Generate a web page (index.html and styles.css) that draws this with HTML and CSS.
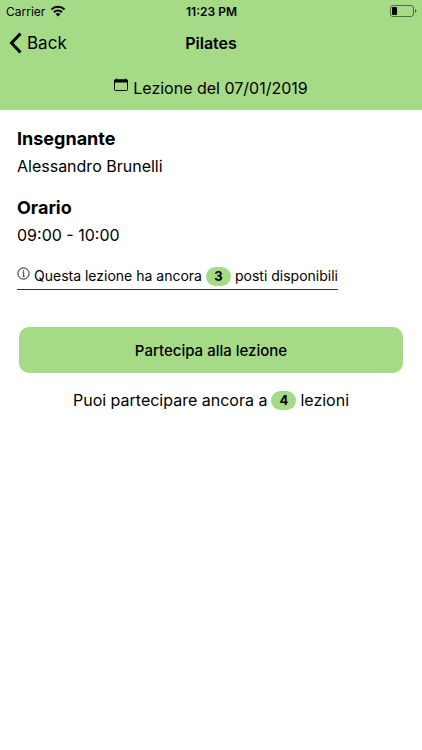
FILE: index.html
```html
<!DOCTYPE html>
<html lang="it">
<head>
    <meta charset="UTF-8">
    <meta name="viewport" content="width=device-width, initial-scale=1.0">
    <title>Pilates</title>
    <link rel="stylesheet" href="styles.css">
</head>
<body>
    <header class="header">
        <div class="status-bar">
            <div class="carrier">
                <span>Carrier</span>
                <svg width="16" height="12" viewBox="0 0 16 12" fill="none" stroke="#000" stroke-width="2">
                    <path d="M1.500 4.500C5 .9 11 .9 14.500 4.500"/>
                    <path d="M4 7.200C6.200 5 9.800 5 12 7.200"/>
                    <path d="M8 11.500L5.600 9C7 7.800 9 7.800 10.400 9Z" fill="#000" stroke="none"/>
                </svg>
            </div>
            <span class="time">11:23 PM</span>
            <svg class="battery" width="27" height="12" viewBox="0 0 27 12">
                <rect x=".5" y=".5" width="23" height="11" rx="2.500" fill="none" stroke="#000" stroke-opacity=".5"/>
                <rect x="2" y="2" width="5" height="8" rx="1"/>
                <path d="M25 4v4c2-.8 2-3.200 0-4z" fill-opacity=".5"/>
            </svg>
        </div>
        <nav class="nav-bar">
            <a class="back" href="#">
                <svg width="13" height="22" viewBox="0 0 13 22" fill="none" stroke="#000" stroke-width="3">
                    <path d="M11.500 1.500L2.500 11L11.500 20.500"/>
                </svg>
                <span>Back</span>
            </a>
            <h1>Pilates</h1>
        </nav>
        <div class="date">
            <svg width="14" height="14" viewBox="0 0 14 14">
                <rect x=".5" y="2" width="13" height="10.500" rx="1" fill="none" stroke="#000"/>
                <path d="M0 2.500a1 1 0 0 1 1-1h1V.5h1v1h8v-1h1v1h1a1 1 0 0 1 1 1V4.500H0z"/>
            </svg>
            <span>Lezione del 07/01/2019</span>
        </div>
    </header>
    <main class="content">
        <section class="detail">
            <h2>Insegnante</h2>
            <p>Alessandro Brunelli</p>
        </section>
        <section class="detail">
            <h2>Orario</h2>
            <p>09:00 - 10:00</p>
        </section>
        <p class="places">
            <svg class="info" width="13" height="13" viewBox="0 0 13 13" fill="none" stroke="#000">
                <circle cx="6.500" cy="6.500" r="5.600" stroke-width=".9"/>
                <path d="M5.600 5.700h1.100v3.500M5.600 9.300h2.100" stroke-width=".8"/>
                <circle cx="6.500" cy="3.900" r=".7" fill="#000" stroke="none"/>
            </svg>
            <span>Questa lezione ha ancora</span>
            <span class="badge">3</span>
            <span>posti disponibili</span>
        </p>
        <button class="join" type="button">Partecipa alla lezione</button>
        <p class="remaining">
            <span>Puoi partecipare ancora a</span>
            <span class="badge">4</span>
            <span>lezioni</span>
        </p>
    </main>
</body>
</html>
```

FILE: styles.css
```css
body {
    margin: 0;
    background: white;
    color: black;
    font-family: Inter, "Liberation Sans", sans-serif;
    font-size: 16px;
}
h1, h2, p {
    margin: 0;
}
.header {
    padding-bottom: 12px;
    background: #a5da86;
}
.status-bar {
    display: grid;
    grid-template-columns: 1fr auto 1fr;
    align-items: center;
    height: 22px;
    padding: 0 5px 0 6px;
    font-size: 12px;
}
.carrier {
    display: flex;
    align-items: center;
    gap: 5px;
}
.time {
    font-weight: 600;
}
.battery {
    justify-self: end;
}
.nav-bar {
    display: grid;
    grid-template-columns: 1fr auto 1fr;
    align-items: center;
    height: 42px;
    padding: 0 9px;
}
.back {
    display: flex;
    align-items: center;
    gap: 5px;
    color: black;
    font-size: 17px;
    text-decoration: none;
}
h1 {
    font-size: 16px;
    font-weight: 600;
}
.date {
    display: flex;
    justify-content: center;
    gap: 5px;
    padding-top: 14px;
    line-height: 20px;
}
.content {
    padding: 16px 17px;
}
.detail {
    margin-bottom: 15px;
}
h2 {
    font-size: 18px;
    font-weight: 700;
    line-height: 26px;
}
.detail p {
    line-height: 28px;
}
.places {
    display: flex;
    align-items: center;
    gap: 4px;
    width: fit-content;
    padding-top: 1px;
    padding-bottom: 2px;
    border-bottom: 1px solid #333;
    font-size: 14px;
    line-height: 22px;
}
.info {
    align-self: flex-start;
    margin-top: 2px;
}
.badge {
    width: 25px;
    border-radius: 10px;
    background: #a5da86;
    font-size: 13px;
    font-weight: 700;
    line-height: 19px;
    text-align: center;
}
.join {
    display: block;
    width: calc(100% - 4px);
    height: 46px;
    margin: 37px auto 0;
    padding: 0;
    border: none;
    border-radius: 10px;
    background: #a5da86;
    color: black;
    font-family: inherit;
    font-size: 15px;
    font-weight: 500;
}
.remaining {
    display: flex;
    justify-content: center;
    align-items: center;
    gap: 4px;
    margin-top: 16px;
    line-height: 22px;
}
```
